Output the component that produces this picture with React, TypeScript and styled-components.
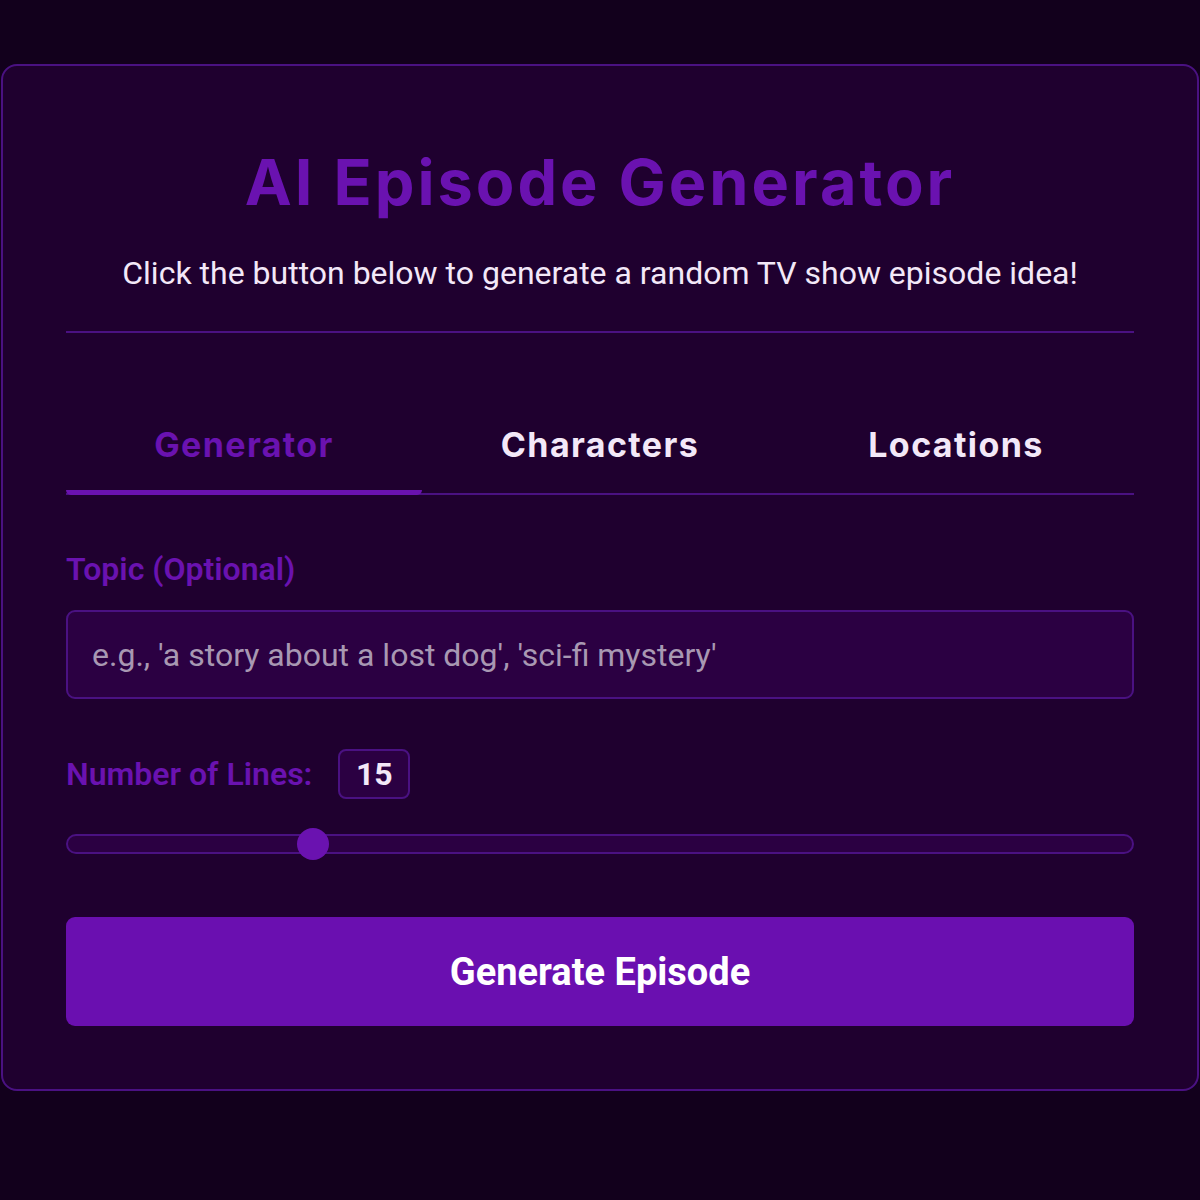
import React from "react";
import styled, { createGlobalStyle } from "styled-components";

const Global = createGlobalStyle`
  html, body { margin: 0; padding: 0; background: #12001c; }
  body { font-family: Roboto, "Noto Sans", sans-serif; color: #f3e8f8; }
  * { box-sizing: border-box; }
`;

const Page = styled.div`
  min-height: 1200px;
  padding: 64px 1px 0 1px;
  background: #12001c;
`;

const Card = styled.div`
  background: #1f002f;
  border: 2px solid #4a1182;
  border-radius: 16px;
  padding: 64px 63px 63px;
  display: flex;
  flex-direction: column;
`;

const Title = styled.h1`
  margin: 14px 0 0;
  text-align: center;
  font-family: Inter, "Open Sans", sans-serif;
  font-weight: 700;
  font-size: 63px;
  line-height: 76px;
  color: #6a12b0;
  letter-spacing: 3px;
`;

const Subtitle = styled.p`
  margin: 34px 0 0;
  text-align: center;
  font-size: 32px;
  line-height: 38px;
  color: #f3e8f8;
`;

const Divider = styled.hr`
  margin: 39px 0 0;
  border: 0;
  height: 2px;
  background: #4a1182;
`;

const Tabs = styled.div`
  margin-top: 92px;
  display: grid;
  grid-template-columns: repeat(3, 1fr);
  border-bottom: 2px solid #4a1182;
`;

const Tab = styled.div<{ $active?: boolean }>`
  position: relative;
  text-align: center;
  font-family: Inter, "Open Sans", sans-serif;
  font-weight: 700;
  font-size: 34px;
  line-height: 40px;
  letter-spacing: 1.4px;
  padding: 0 0 28px;
  color: ${(p) => (p.$active ? "#6a12b0" : "#f3e8f8")};
  &::after {
    content: "";
    display: ${(p) => (p.$active ? "block" : "none")};
    position: absolute;
    left: 0;
    right: 0;
    bottom: -2px;
    height: 5px;
    background: #6a12b0;
    border-radius: 0 0 6px 6px;
  }
`;

const Label = styled.label`
  display: block;
  margin-top: 55px;
  font-size: 32px;
  font-weight: 600;
  line-height: 38px;
  color: #6a12b0;
`;

const Input = styled.input`
  margin-top: 22px;
  width: 100%;
  height: 89px;
  background: #2b0042;
  border: 2px solid #4a1182;
  border-radius: 9px;
  padding: 0 24px;
  font-family: Roboto, sans-serif;
  font-size: 32px;
  color: #f3e8f8;
  outline: none;
  &::placeholder { color: #a898b2; }
`;

const LinesRow = styled.div`
  margin-top: 50px;
  display: flex;
  align-items: center;
  gap: 26px;
`;

const LinesLabel = styled.span`
  font-size: 32px;
  font-weight: 600;
  line-height: 38px;
  color: #6a12b0;
`;

const Badge = styled.span`
  width: 72px;
  height: 50px;
  display: flex;
  align-items: center;
  justify-content: center;
  background: #2b0042;
  border: 2px solid #4a1182;
  border-radius: 8px;
  font-size: 32px;
  font-weight: 700;
  color: #f3e8f8;
`;

const Slider = styled.div`
  position: relative;
  margin-top: 35px;
  height: 20px;
  background: #2b0042;
  border: 2px solid #4a1182;
  border-radius: 10px;
`;

const Thumb = styled.div`
  position: absolute;
  top: 50%;
  width: 32px;
  height: 32px;
  margin: -16px 0 0 -16px;
  border-radius: 50%;
  background: #6a12b0;
`;

const Button = styled.button`
  margin-top: 63px;
  width: 100%;
  height: 109px;
  border: 0;
  border-radius: 9px;
  background: #6a0fb0;
  color: #ffffff;
  font-family: Roboto, sans-serif;
  font-weight: 700;
  font-size: 38px;
  cursor: pointer;
`;

export default function App() {
  const value = 15;
  const pct = (value - 5) / 45;
  return (
    <Page>
      <Global />
      <Card>
        <Title>AI Episode Generator</Title>
        <Subtitle>Click the button below to generate a random TV show episode idea!</Subtitle>
        <Divider />
        <Tabs>
          <Tab $active>Generator</Tab>
          <Tab>Characters</Tab>
          <Tab>Locations</Tab>
        </Tabs>
        <Label>Topic (Optional)</Label>
        <Input placeholder="e.g., 'a story about a lost dog', 'sci-fi mystery'" />
        <LinesRow>
          <LinesLabel>Number of Lines:</LinesLabel>
          <Badge>{value}</Badge>
        </LinesRow>
        <Slider>
          <Thumb style={{ left: `calc(16px + ${pct} * (100% - 32px))` }} />
        </Slider>
        <Button>Generate Episode</Button>
      </Card>
    </Page>
  );
}
